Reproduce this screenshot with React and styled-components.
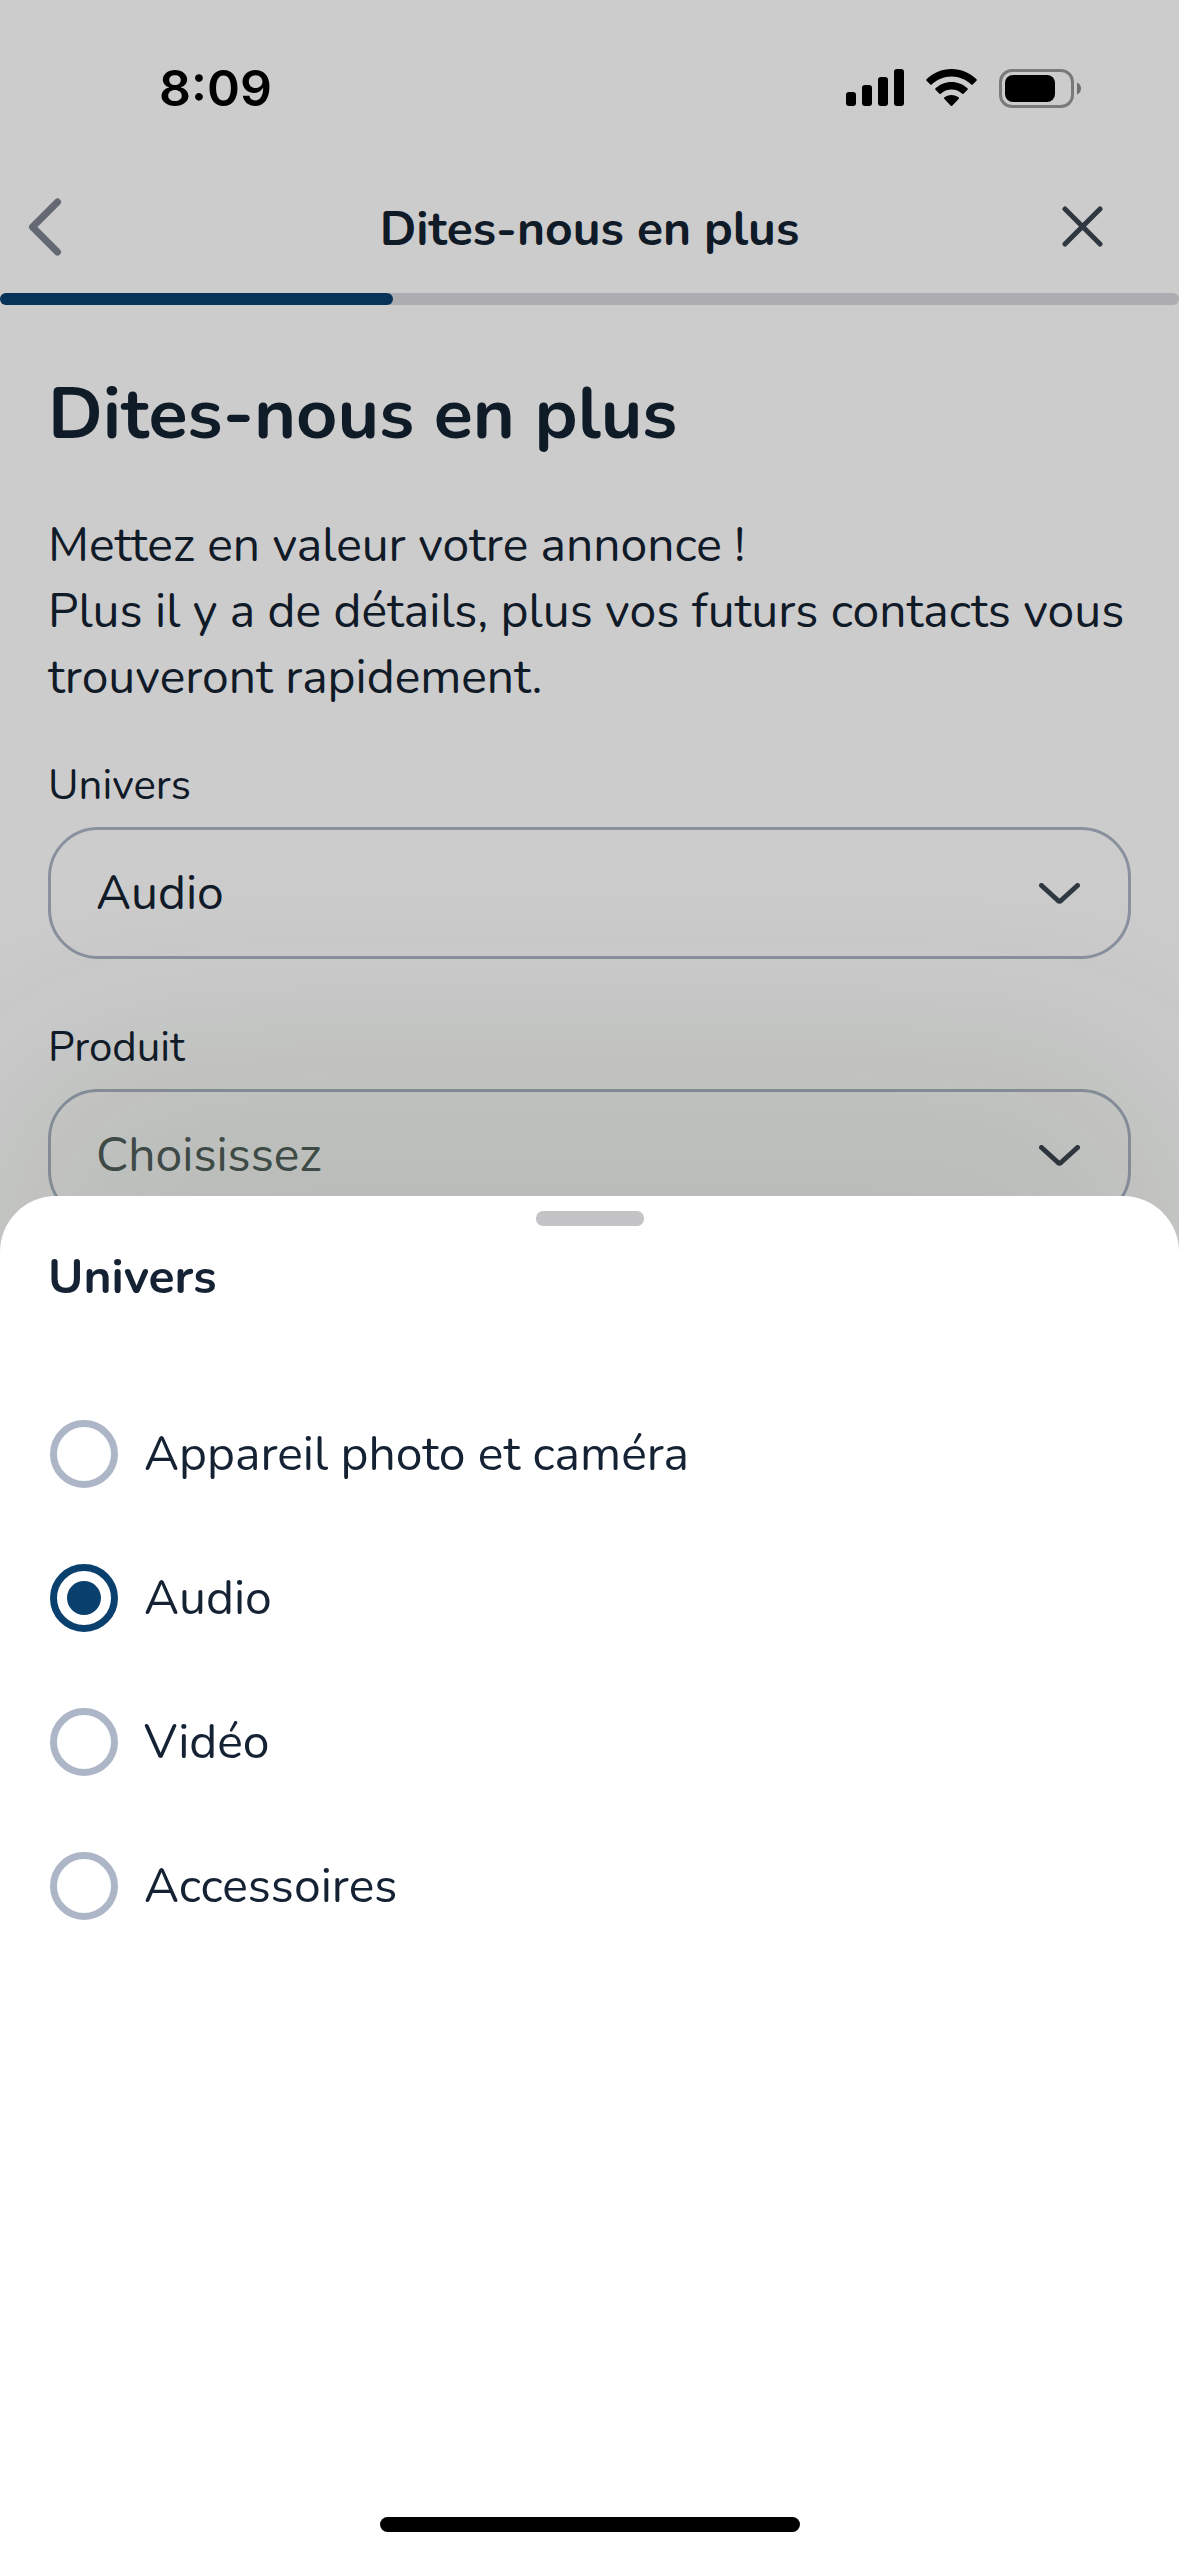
import React, { useState } from 'react'
import styled, { createGlobalStyle } from 'styled-components';

const GlobalStyles = createGlobalStyle`
  :root {
    --navy: #0a406e;
    --ink: #152233;
    --slate: #3b4652;
    --muted: #54615f;
    --outline: #acb6c7;
    --gutter: 48px;
    --fsTitle: 72px;
    --fsBody: 48px;
    --fsLabel: 42px;
  }

  * {
    box-sizing: border-box;
  }

  body {
    margin: 0;
    background: #fff;
    color: var(--ink);
    font-family: 'Nunito', Lato, 'Noto Sans', sans-serif;
    font-size: var(--fsBody);
    line-height: 66px;
  }

  button {
    display: flex;
    padding: 0;
    border: 0;
    background: none;
  }
`;

const StatusBar = styled.div`
  display: flex;
  justify-content: space-between;
  align-items: center;
  height: 176px;
  padding: 0 97px 0 159px;
  color: #000;
  font-family: Inter, sans-serif;
  font-size: 50px;
  font-weight: 600;

  .icons {
    display: flex;
    align-items: center;
    gap: 22px;
  }

  svg {
    display: block;
  }
`;

const HeaderStyles = styled.header`
  display: grid;
  grid-template-columns: 1fr auto 1fr;
  align-items: center;
  height: 101px;
  margin-bottom: 16px;
  padding: 0 28px;

  .title {
    padding-top: 4px;
    font-weight: 700;
  }

  .close {
    justify-self: end;
    margin-right: 48px;
  }
`;

const Progress = styled.div`
  height: 12px;
  border-radius: 6px;
  background: #d7d8de;

  .bar {
    height: 100%;
    border-radius: 6px;
    background: var(--navy);
  }
`;

const Content = styled.main`
  padding: 63px var(--gutter) 0;

  h1 {
    margin: 0 0 52px;
    font-size: var(--fsTitle);
    font-weight: 700;
    line-height: 92px;
  }

  p {
    margin: 0 0 49px;
  }
`;

const FieldStyles = styled.div`
  margin-bottom: 62px;

  label {
    display: block;
    margin-bottom: 14px;
    font-size: var(--fsLabel);
    line-height: 54px;
  }

  .control {
    display: grid;
    align-items: center;
  }

  select,
  svg {
    grid-area: 1 / 1;
  }

  select {
    width: 100%;
    height: 132px;
    padding: 0 120px 0 45px;
    border: 3px solid var(--outline);
    border-radius: 50px;
    background: transparent;
    color: ${({ $empty }) => ($empty ? 'var(--muted)' : 'inherit')};
    font: inherit;
    appearance: none;
    opacity: 1;
  }

  svg {
    justify-self: end;
    margin-right: 51px;
    stroke: var(--slate);
    pointer-events: none;
  }
`;

const Scrim = styled.div`
  position: fixed;
  inset: 0;
  overflow: hidden;
  background: rgba(0, 0, 0, 0.2);
`;

const Sheet = styled.section`
  position: absolute;
  inset: 1196px 0 0;
  display: flex;
  flex-direction: column;
  padding: 15px var(--gutter) 24px;
  border-radius: 56px 56px 0 0;
  background: #fff;
  box-shadow: 0 -150px 240px rgba(20, 42, 0, 0.11);

  h2 {
    margin: 18px 0 110px;
    font-size: var(--fsBody);
    font-weight: 700;
  }
`;

const Grabber = styled.div`
  align-self: center;
  width: 108px;
  height: 15px;
  border-radius: 7px;
  background: #c4c4c6;
`;

const Options = styled.div`
  flex: 1;
  display: flex;
  flex-direction: column;
  gap: 76px;
`;

const Option = styled.label`
  display: flex;
  align-items: center;
  gap: 26px;
  line-height: 68px;

  input {
    display: grid;
    place-content: center;
    width: 68px;
    height: 68px;
    margin: 0 0 0 2px;
    border: 7px solid var(--outline);
    border-radius: 50%;
    appearance: none;
  }

  input:checked {
    border-color: var(--navy);
  }

  input:checked::before {
    content: '';
    width: 34px;
    height: 34px;
    border-radius: 50%;
    background: var(--navy);
  }
`;

const HomeIndicator = styled.div`
  align-self: center;
  width: 420px;
  height: 15px;
  border-radius: 8px;
  background: #000;
`;

const universes = ['Appareil photo et caméra', 'Audio', 'Vidéo', 'Accessoires'];

function SignalIcon() {
  return <svg width="58" height="38" viewBox="0 0 58 38" aria-hidden="true">
    <rect x="0" y="23" width="10" height="14" rx="3" />
    <rect x="16" y="16" width="10" height="21" rx="3" />
    <rect x="32" y="8" width="10" height="29" rx="3" />
    <rect x="48" y="0" width="10" height="37" rx="3" />
  </svg>
}

function WifiIcon() {
  return <svg width="51" height="38" viewBox="0 0 51 38" aria-hidden="true">
    <path d="M25.5 0C35.2 0 44 3.8 50.5 10.2Q51.2 11 50.5 11.7L46.6 15.6Q46 16.2 45.3 15.6C40.1 10.6 33.1 7.6 25.5 7.6S10.9 10.6 5.7 15.6Q5 16.2 4.4 15.6L.5 11.7Q-.2 11 .5 10.2C7 3.8 15.8 0 25.5 0Z" />
    <path d="M25.5 13C31.7 13 37.3 15.4 41.5 19.3Q42.2 20 41.5 20.7L37.5 24.7Q36.9 25.3 36.2 24.7C33.4 22.2 29.6 20.6 25.5 20.6S17.6 22.2 14.8 24.7Q14.1 25.3 13.5 24.7L9.5 20.7Q8.8 20 9.5 19.3C13.7 15.4 19.3 13 25.5 13Z" />
    <path d="M25.5 25.9C28.3 25.9 30.8 26.8 32.8 28.4Q33.5 29 32.8 29.8L26.2 36.7Q25.5 37.4 24.8 36.7L18.2 29.8Q17.5 29 18.2 28.4C20.2 26.8 22.7 25.9 25.5 25.9Z" />
  </svg>
}

function BatteryIcon() {
  return <svg width="83" height="39" viewBox="0 0 83 39" aria-hidden="true">
    <rect x="1.5" y="1.5" width="72" height="36" rx="11.5" fill="none" stroke="#000" strokeOpacity="0.4" strokeWidth="3" />
    <path d="M78 13.500C80.5 14.5 82 16.8 82 19.5S80.5 24.5 78 25.5Z" fillOpacity="0.45" />
    <rect x="6" y="6" width="50" height="27" rx="8" />
  </svg>
}

function Field({ id, label, value, placeholder }) {
  return <FieldStyles $empty={!value}>
    <label htmlFor={id}>{label}</label>
    <div className="control">
      <select id={id} value={value} onChange={() => {}}>
        {placeholder && <option value="">{placeholder}</option>}
        {value && <option value={value}>{value}</option>}
      </select>
      <svg width="41" height="21" viewBox="0 0 41 21" fill="none" strokeWidth="5" strokeLinecap="round" strokeLinejoin="round" aria-hidden="true">
        <path d="M2.5 2.5L19 17.5Q20.5 18.8 22 17.5L38.5 2.5" />
      </svg>
    </div>
  </FieldStyles>
}

export default function App() {
  const [universe, setUniverse] = useState('Audio');
  const progress = 1 / 3;

  return <>
    <GlobalStyles />
    <StatusBar>
      <span>8:09</span>
      <div className="icons">
        <SignalIcon />
        <WifiIcon />
        <BatteryIcon />
      </div>
    </StatusBar>

    <HeaderStyles>
      <button type="button" aria-label="Retour">
        <svg width="34" height="58" viewBox="0 0 34 58" fill="none" stroke="#7d838f" strokeWidth="7" strokeLinecap="round" strokeLinejoin="round">
          <path d="M29.5 4L4.5 29L29.5 54" />
        </svg>
      </button>
      <span className="title">Dites-nous en plus</span>
      <button type="button" className="close" aria-label="Fermer">
        <svg width="41" height="41" viewBox="0 0 41 41" fill="none" stroke="#3b4652" strokeWidth="5" strokeLinecap="round">
          <path d="M3 3L38 38M38 3L3 38" />
        </svg>
      </button>
    </HeaderStyles>

    <Progress role="progressbar" aria-label="Progression" aria-valuenow={33}>
      <div className="bar" style={{ width: `${progress * 100}%` }} />
    </Progress>

    <Content>
      <h1>Dites-nous en plus</h1>
      <p>
        Mettez en valeur votre annonce !<br />
        Plus il y a de détails, plus vos futurs contacts vous trouveront rapidement.
      </p>
      <Field id="univers" label="Univers" value={universe} />
      <Field id="produit" label="Produit" value="" placeholder="Choisissez" />
    </Content>

    <Scrim>
      <Sheet role="dialog" aria-labelledby="sheet-title">
        <Grabber />
        <h2 id="sheet-title">Univers</h2>
        <Options role="radiogroup" aria-labelledby="sheet-title">
          {universes.map(name => <Option key={name}>
            <input
              type="radio"
              name="universe"
              value={name}
              checked={name === universe}
              onChange={() => setUniverse(name)}
            />
            {name}
          </Option>)}
        </Options>
        <HomeIndicator />
      </Sheet>
    </Scrim>
  </>
}
